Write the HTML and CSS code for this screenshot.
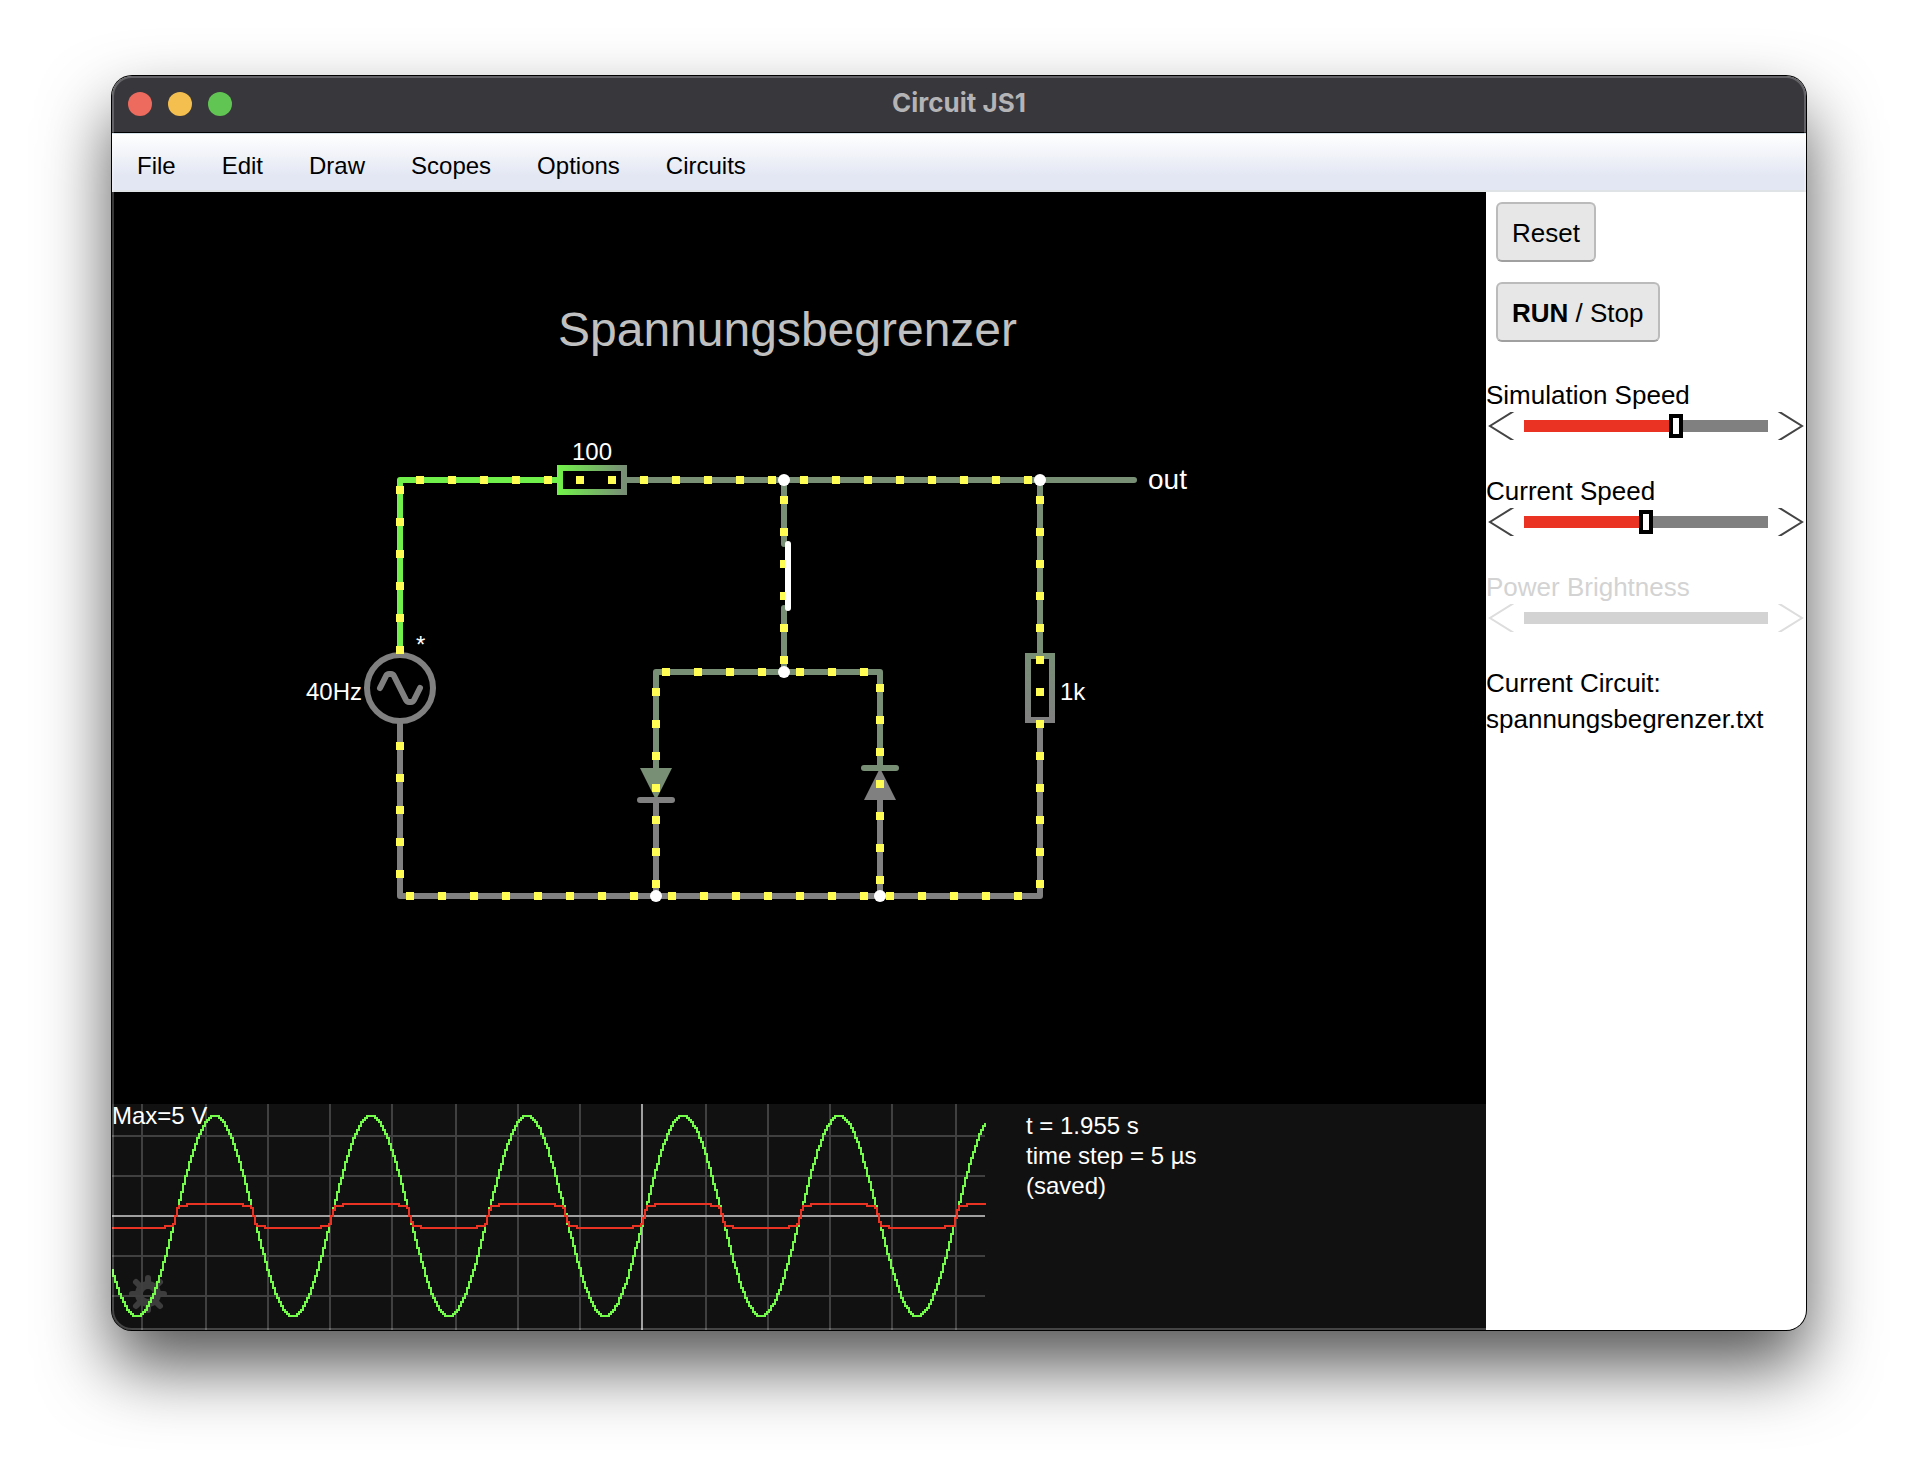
FILE: index.html
```html
<!DOCTYPE html>
<html lang="en">
<head>
<meta charset="utf-8">
<title>Circuit JS1</title>
<link rel="stylesheet" href="styles.css">
</head>
<body>
<div class="window">
  <header class="titlebar">
    <div class="lights">
      <button class="light light-close" aria-label="Close"></button>
      <button class="light light-min" aria-label="Minimize"></button>
      <button class="light light-max" aria-label="Zoom"></button>
    </div>
    <h1 class="title">Circuit JS1</h1>
  </header>
  <nav class="menu">
    <button class="menu-item">File</button>
    <button class="menu-item">Edit</button>
    <button class="menu-item">Draw</button>
    <button class="menu-item">Scopes</button>
    <button class="menu-item">Options</button>
    <button class="menu-item">Circuits</button>
  </nav>
  <div class="workspace">
    <main class="board">
      <svg class="circuit" viewBox="112 192 1374 912">
        <defs>
          <linearGradient id="drop" gradientUnits="userSpaceOnUse" x1="560" y1="0" x2="624" y2="0">
            <stop offset="0" stop-color="#71ef4a"/><stop offset="1" stop-color="#788f76"/>
          </linearGradient>
          <linearGradient id="load" gradientUnits="userSpaceOnUse" x1="0" y1="656" x2="0" y2="720">
            <stop offset="0" stop-color="#788f76"/><stop offset="1" stop-color="#808080"/>
          </linearGradient>
        </defs>
        <text class="heading" x="558" y="346">Spannungsbegrenzer</text>

        <g class="wire">
          <path class="high" d="M400 655V480H560"/>
          <path class="mid" d="M624 480H1134M784 480V544M784 608V672M656 768V672H880V768M1040 480V656"/>
          <path class="low" d="M400 721V896H1040V720M656 800V896M880 800V896"/>
          <circle class="low" cx="400" cy="688" r="33"/>
          <path class="low" d="M380 688L386 676Q387 674 389 674H391Q393 674 394 676L406 700Q407 702 409 702H411Q413 702 414 700L420 688"/>
        </g>
        <rect class="resistor" x="560" y="468" width="64" height="24" stroke="url(#drop)"/>
        <rect class="resistor" x="1028" y="656" width="24" height="64" stroke="url(#load)"/>
        <path class="fill-mid" d="M640 768H672L656 800Z"/>
        <path class="fill-low" d="M864 800H896L880 768Z"/>
        <g class="wire">
          <path class="low" d="M640 800H672"/>
          <path class="mid" d="M864 768H896"/>
        </g>

        <g class="charge">
          <path d="M400 486V656M400 742V880"/>
          <path d="M416 480H776M800 480H1034"/>
          <path d="M784 496V666M656 688V890M880 684V886M1040 496V890"/>
          <path d="M662 672H768M796 672H870"/>
          <path d="M406 896H640M668 896H870M886 896H1024"/>
        </g>
        <path class="switch" d="M788 544V608"/>
        <g class="node">
          <circle cx="784" cy="480" r="6"/>
          <circle cx="1040" cy="480" r="6"/>
          <circle cx="784" cy="672" r="6"/>
          <circle cx="656" cy="896" r="6"/>
          <circle cx="880" cy="896" r="6"/>
        </g>
        <g class="value">
          <text x="572" y="460">100</text>
          <text x="306" y="700">40Hz</text>
          <text x="416" y="653">*</text>
          <text x="1060" y="700">1k</text>
          <text class="out" x="1148" y="489">out</text>
        </g>
      </svg>
      <section class="scopes">
        <svg class="scope" viewBox="112 1104 873 226">
          <g class="gear">
            <circle cx="148" cy="1294" r="9"/>
            <path d="M148 1282V1278M148 1306V1310M136 1294H132M160 1294H164M139 1285L136 1282M157 1285L160 1282M139 1303L136 1306M157 1303L160 1306"/>
          </g>
          <path class="grid" d="M142 1104V1330M206 1104V1330M268 1104V1330M330 1104V1330M392 1104V1330M456 1104V1330M518 1104V1330M580 1104V1330M706 1104V1330M768 1104V1330M830 1104V1330M892 1104V1330M956 1104V1330M112 1136H985M112 1176H985M112 1256H985M112 1296H985"/>
          <path class="axis" d="M642 1104V1330M112 1216H985"/>
          <text class="peak" x="112" y="1124">Max=5 V</text>
          <path class="trace trace-in" id="trace-in"/>
          <path class="trace trace-out" id="trace-out"/>
        </svg>
        <p class="status">t = 1.955 s<br>time step = 5 µs<br>(saved)</p>
      </section>
    </main>
    <aside class="panel">
      <button class="action">Reset</button>
      <button class="action"><strong>RUN</strong> / Stop</button>
      <div class="controls">
        <div class="control">
          <label for="sim-speed">Simulation Speed</label>
          <div class="slider">
            <button class="arrow" aria-label="Slower simulation"><svg viewBox="0 0 38 28"><path d="M28 -1L4 14L28 29"/></svg></button>
            <input id="sim-speed" type="range" value="63" style="--value: 63%">
            <button class="arrow" aria-label="Faster simulation"><svg viewBox="0 0 38 28"><path d="M10 -1L34 14L10 29"/></svg></button>
          </div>
        </div>
        <div class="control">
          <label for="cur-speed">Current Speed</label>
          <div class="slider">
            <button class="arrow" aria-label="Slower current"><svg viewBox="0 0 38 28"><path d="M28 -1L4 14L28 29"/></svg></button>
            <input id="cur-speed" type="range" value="50" style="--value: 50%">
            <button class="arrow" aria-label="Faster current"><svg viewBox="0 0 38 28"><path d="M10 -1L34 14L10 29"/></svg></button>
          </div>
        </div>
        <div class="control control-off">
          <label for="brightness">Power Brightness</label>
          <div class="slider">
            <button class="arrow" disabled aria-label="Dimmer"><svg viewBox="0 0 38 28"><path d="M28 -1L4 14L28 29"/></svg></button>
            <input id="brightness" type="range" value="50" disabled>
            <button class="arrow" disabled aria-label="Brighter"><svg viewBox="0 0 38 28"><path d="M10 -1L34 14L10 29"/></svg></button>
          </div>
        </div>
      </div>
      <p class="current">Current Circuit:<br>spannungsbegrenzer.txt</p>
    </aside>
  </div>
</div>
<script src="scope.js"></script>
</body>
</html>
```
FILE: scope.js
```js
// Draws the input sine and the clipped output as 2px sample columns.
const LEFT = 112, RIGHT = 985, ZERO = 1216, PERIOD = 156.1, START = 176;

function input(x) {
  return 100 * Math.sin((2 * Math.PI * (x - START)) / PERIOD);
}

function output(x) {
  const v = input(x);
  const size = Math.abs(v) > 42 ? 12 : Math.min(Math.abs(v) * 0.9, 10);
  return Math.sign(v) * size;
}

function trace(signal) {
  const level = x => ZERO - 2 * Math.round(signal(x) / 2);
  let d = "";
  for (let x = LEFT; x < RIGHT; x += 2) {
    const a = level(x), b = level(x + 2);
    d += `M${x + 1} ${Math.min(a, b) - 1}V${Math.max(a, b) + 1}`;
  }
  return d;
}

document.getElementById("trace-in").setAttribute("d", trace(input));
document.getElementById("trace-out").setAttribute("d", trace(output));
```
FILE: styles.css
```css
* { box-sizing: border-box; }

body {
  margin: 0;
  padding: 76px 112px 148px;
  background: #fff;
  color: #000;
  font-family: "Liberation Sans", Arial, sans-serif;
}

button {
  margin: 0;
  padding: 0;
  border: 0;
  background: none;
  color: inherit;
  font: inherit;
}

p { margin: 0; }

.window {
  position: relative;
  overflow: hidden;
  border-radius: 20px;
  background: #fff;
  box-shadow: 0 0 0 1px #000, 0 36px 70px rgba(0, 0, 0, 0.67);
}

/* Light rim that lies over the window's edge */
.window::after {
  content: "";
  position: absolute;
  inset: 0;
  border-radius: 20px;
  box-shadow: inset 0 0 0 2px rgba(255, 255, 255, 0.22);
  pointer-events: none;
}

.titlebar {
  display: grid;
  grid-template-columns: 1fr auto 1fr;
  align-items: center;
  height: 57px;
  padding: 0 16px;
  border-bottom: 1px solid #000;
  background: #38373b;
}

.lights { display: flex; gap: 16px; }
.light { width: 24px; height: 24px; border-radius: 50%; }
.light-close { background: #ec6a5e; }
.light-min { background: #f4bf4f; }
.light-max { background: #61c554; }

.title {
  margin: 0;
  padding-bottom: 2px;
  color: #b4b3b6;
  font: 700 26px/32px Inter, sans-serif;
}

.menu {
  display: flex;
  align-items: center;
  gap: 46px;
  height: 59px;
  padding: 8px 25px 0;
  border-top: 1px solid #d5e2ea;
  border-bottom: 2px solid #e0e3e6;
  background: linear-gradient(#fff, #e3e7f3 75%);
  font-size: 24px;
}

.workspace { display: flex; }

.board {
  flex: 1;
  min-width: 0;
  background: #000;
}

.circuit, .scope { display: block; width: 100%; }

.heading { fill: #c0c0c0; font-size: 48px; }
.value { fill: #fff; font-size: 24px; }
.out { font-size: 28px; }

.wire {
  fill: none;
  stroke-width: 6px;
  stroke-linecap: round;
  stroke-linejoin: round;
}
.high { stroke: #71ef4a; }
.mid { stroke: #788f76; }
.low { stroke: #808080; }
.fill-mid { fill: #788f76; }
.fill-low { fill: #808080; }
.resistor { fill: #000; stroke-width: 6px; }
.charge {
  fill: none;
  stroke: #fffd54;
  stroke-width: 8px;
  stroke-dasharray: 8 24;
}
.switch { stroke: #fff; stroke-width: 6px; stroke-linecap: round; }
.node { fill: #fff; }

.scopes {
  display: grid;
  grid-template-columns: 873fr 501fr;
  background: #111;
}
.scope { overflow: visible; }
.grid { stroke: #404040; stroke-width: 2px; }
.axis { stroke: #a0a0a0; stroke-width: 2px; }
.peak { fill: #fff; font-size: 24px; }
.trace { stroke-width: 2px; shape-rendering: crispEdges; }
.trace-in { stroke: #75fb4c; }
.trace-out { stroke: #ea3323; }
.gear { fill: none; stroke: #3d3d3d; stroke-linecap: round; }
.gear circle { stroke-width: 8px; }
.gear path { stroke-width: 6px; }

.status {
  padding: 7px 0 0 41px;
  color: #fff;
  font-size: 24px;
  line-height: 30px;
}

.panel {
  flex: 0 0 320px;
  font-size: 26px;
}

.action {
  display: block;
  height: 60px;
  margin: 10px 10px 20px;
  padding: 2px 14px 0;
  border: 2px solid #bbb;
  border-bottom-color: #a0a0a0;
  border-radius: 6px;
  background: #e7e7e7;
}

.controls {
  display: grid;
  gap: 34px;
  margin: 37px 0 32px;
}
.control label { display: block; line-height: 32px; }
.control-off { color: #d3d3d3; }

.slider {
  display: flex;
  align-items: center;
  height: 30px;
}
.slider input {
  flex: 1;
  min-width: 0;
  height: 24px;
  margin: 0;
  background: none;
  -webkit-appearance: none;
  appearance: none;
}
.slider input::-webkit-slider-runnable-track {
  height: 12px;
  background: linear-gradient(to right, #ea3323 var(--value), #808080 var(--value));
}
.slider input::-webkit-slider-thumb {
  -webkit-appearance: none;
  width: 14px;
  height: 24px;
  margin-top: -6px;
  border: 4px solid #000;
  background: #fff;
}
.slider input:disabled::-webkit-slider-runnable-track { background: #d3d3d3; }
.slider input:disabled::-webkit-slider-thumb { visibility: hidden; }

.arrow { width: 38px; height: 28px; }
.arrow svg {
  display: block;
  width: 38px;
  height: 28px;
  fill: none;
  stroke: #444;
  stroke-width: 2px;
}
.arrow:disabled svg { stroke: #ddd; }

.current { line-height: 36px; }
```
